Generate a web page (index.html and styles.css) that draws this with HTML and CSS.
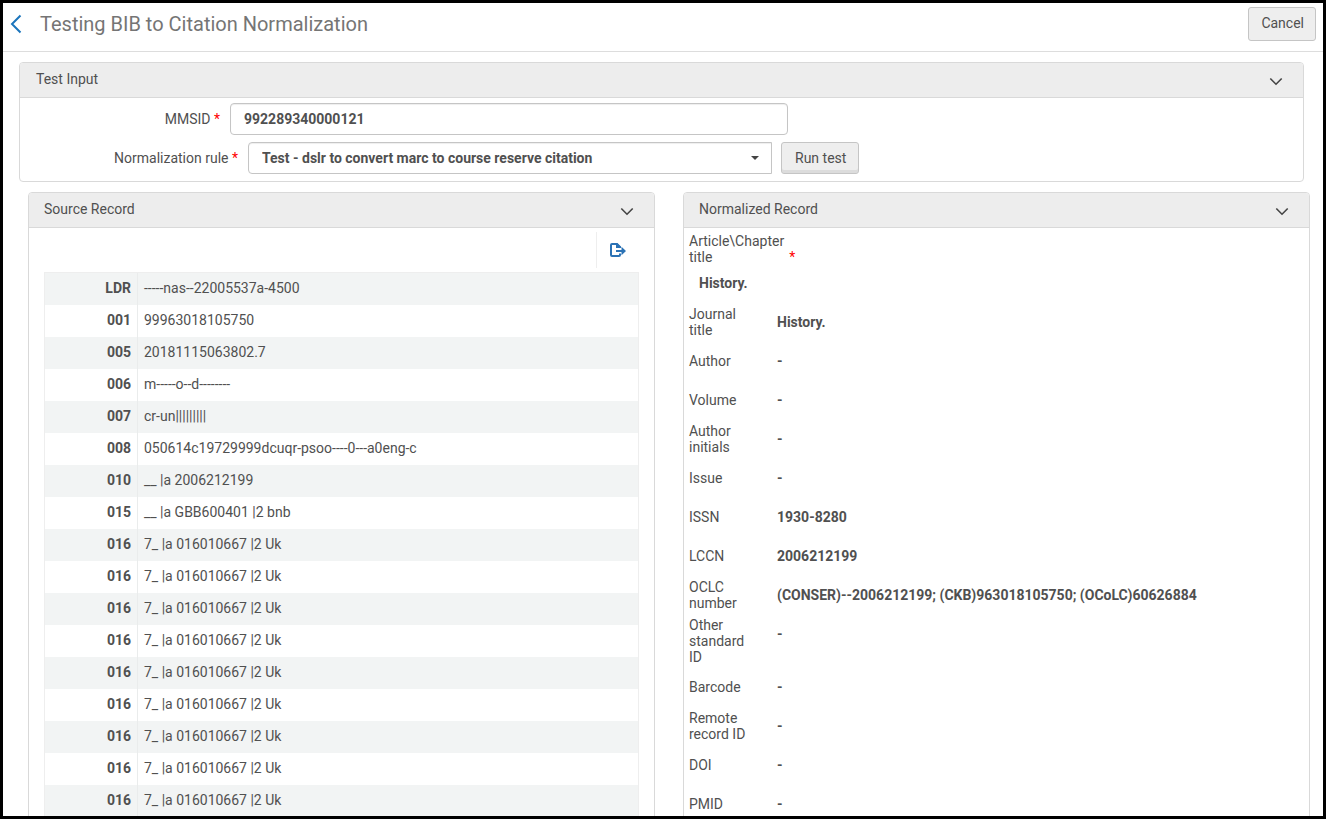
FILE: index.html
```html
<!DOCTYPE html>
<html lang="en">
<head>
<meta charset="utf-8">
<title>Testing BIB to Citation Normalization</title>
<link rel="stylesheet" href="styles.css">
</head>
<body>
<div class="app">
  <header class="page-header">
    <a class="back" href="#" aria-label="Back"><svg width="12" height="20" viewBox="0 0 12 20"><path d="M10.500 1.500 2 10l8.500 8.500"/></svg></a>
    <h1 class="page-title">Testing BIB to Citation Normalization</h1>
    <button class="btn btn-cancel" type="button">Cancel</button>
  </header>

  <main>
    <section class="panel test-input">
      <div class="panel-head">
        <h2>Test Input</h2>
        <button class="toggle" type="button" aria-label="Collapse test input"><svg width="14" height="9" viewBox="0 0 14 9"><path d="M1.300 1.500 7 7.200l5.700-5.700"/></svg></button>
      </div>
      <form class="form">
        <div class="form-row">
          <label class="form-label" for="mmsid">MMSID <span class="req">*</span></label>
          <input class="control control-text" id="mmsid" type="text" value="992289340000121">
        </div>
        <div class="form-row">
          <label class="form-label form-label-wide" for="rule">Normalization rule <span class="req">*</span></label>
          <div class="select-wrap">
            <select class="control control-select" id="rule"><option>Test - dslr to convert marc to course reserve citation</option></select>
            <svg class="caret" width="8" height="4" viewBox="0 0 8 4"><path d="M0 0h8L4 4z"/></svg>
          </div>
          <button class="btn btn-run" type="button">Run test</button>
        </div>
      </form>
    </section>

    <div class="records">
      <section class="panel">
        <div class="panel-head">
          <h2>Source Record</h2>
          <button class="toggle" type="button" aria-label="Collapse source record"><svg width="14" height="9" viewBox="0 0 14 9"><path d="M1.300 1.500 7 7.200l5.700-5.700"/></svg></button>
        </div>
        <div class="source-body">
          <div class="toolbar">
            <button class="export" type="button" aria-label="Export record"><svg width="18" height="16" viewBox="0 0 18 16"><path class="line" d="M11 11.500V13a1 1 0 0 1-1 1H3a1 1 0 0 1-1-1V3a1 1 0 0 1 1-1h4.500L11 5.500"/><path class="fill" d="M7 1h1.500L12 4.500V6H7zM7 8h5.500V4.800L17 9l-4.500 4.200V10H7z"/></svg></button>
          </div>
          <table class="marc">
            <tbody>
              <tr><th scope="row">LDR</th><td>-----nas--22005537a-4500</td></tr>
              <tr><th scope="row">001</th><td>99963018105750</td></tr>
              <tr><th scope="row">005</th><td>20181115063802.7</td></tr>
              <tr><th scope="row">006</th><td>m-----o--d--------</td></tr>
              <tr><th scope="row">007</th><td>cr-un|||||||||</td></tr>
              <tr><th scope="row">008</th><td>050614c19729999dcuqr-psoo----0---a0eng-c</td></tr>
              <tr><th scope="row">010</th><td>__ |a 2006212199</td></tr>
              <tr><th scope="row">015</th><td>__ |a GBB600401 |2 bnb</td></tr>
              <tr><th scope="row">016</th><td>7_ |a 016010667 |2 Uk</td></tr>
              <tr><th scope="row">016</th><td>7_ |a 016010667 |2 Uk</td></tr>
              <tr><th scope="row">016</th><td>7_ |a 016010667 |2 Uk</td></tr>
              <tr><th scope="row">016</th><td>7_ |a 016010667 |2 Uk</td></tr>
              <tr><th scope="row">016</th><td>7_ |a 016010667 |2 Uk</td></tr>
              <tr><th scope="row">016</th><td>7_ |a 016010667 |2 Uk</td></tr>
              <tr><th scope="row">016</th><td>7_ |a 016010667 |2 Uk</td></tr>
              <tr><th scope="row">016</th><td>7_ |a 016010667 |2 Uk</td></tr>
              <tr><th scope="row">016</th><td>7_ |a 016010667 |2 Uk</td></tr>
            </tbody>
          </table>
        </div>
      </section>

      <section class="panel">
        <div class="panel-head">
          <h2>Normalized Record</h2>
          <button class="toggle" type="button" aria-label="Collapse normalized record"><svg width="14" height="9" viewBox="0 0 14 9"><path d="M1.300 1.500 7 7.200l5.700-5.700"/></svg></button>
        </div>
        <dl class="fields">
          <div class="field-stacked">
            <dt><span>Article\Chapter<br>title</span><span class="req">*</span></dt>
            <dd>History.</dd>
          </div>
          <div class="field"><dt>Journal title</dt><dd>History.</dd></div>
          <div class="field"><dt>Author</dt><dd>-</dd></div>
          <div class="field"><dt>Volume</dt><dd>-</dd></div>
          <div class="field"><dt>Author initials</dt><dd>-</dd></div>
          <div class="field"><dt>Issue</dt><dd>-</dd></div>
          <div class="field"><dt>ISSN</dt><dd>1930-8280</dd></div>
          <div class="field"><dt>LCCN</dt><dd>2006212199</dd></div>
          <div class="field"><dt>OCLC number</dt><dd>(CONSER)--2006212199; (CKB)963018105750; (OCoLC)60626884</dd></div>
          <div class="field"><dt>Other standard ID</dt><dd>-</dd></div>
          <div class="field"><dt>Barcode</dt><dd>-</dd></div>
          <div class="field"><dt>Remote record ID</dt><dd>-</dd></div>
          <div class="field"><dt>DOI</dt><dd>-</dd></div>
          <div class="field"><dt>PMID</dt><dd>-</dd></div>
        </dl>
      </section>
    </div>
  </main>
</div>
</body>
</html>
```

FILE: styles.css
```css
* {
  box-sizing: border-box;
}

body {
  margin: 0;
  font-family: Roboto, "Liberation Sans", sans-serif;
  font-size: 14px;
  line-height: 16px;
  color: #505050;
  background: #fff;
}

.app {
  height: 100vh;
  overflow: hidden;
  border: 3px solid #000;
}

button,
input,
select {
  font: inherit;
  color: inherit;
}

.page-header {
  display: flex;
  align-items: flex-start;
  gap: 18px;
  height: 49px;
  padding: 4px 7px 0;
  border-bottom: 1px solid #ddd;
}

.back {
  padding-top: 7px;
}

.back svg {
  display: block;
  fill: none;
  stroke: #1b75bc;
  stroke-width: 2;
}

.page-title {
  flex: 1;
  margin: 0;
  font-size: 20px;
  line-height: 34px;
  font-weight: 400;
  color: #757575;
}

.btn {
  border: 1px solid #c5c5c5;
  border-radius: 3px;
  background: #eee;
  white-space: nowrap;
}

.btn-cancel {
  height: 34px;
  padding: 0 11px 2px 12px;
}

.btn-run {
  height: 32px;
  padding: 0 12px 0 13px;
  box-shadow: inset 0 -3px 0 #dcdcdc;
}

.panel {
  border: 1px solid #d9d9d9;
  border-radius: 4px;
}

.panel-head {
  display: flex;
  align-items: center;
  justify-content: space-between;
  height: 35px;
  padding: 0 20px 0 15px;
  background: #ededed;
  border-bottom: 1px solid #d9d9d9;
  border-radius: 3px 3px 0 0;
}

.panel-head h2 {
  margin: 0;
  padding-bottom: 2px;
  font-size: 14px;
  font-weight: 400;
}

.toggle {
  padding: 3px 0 0;
  border: 0;
  background: none;
}

.toggle svg {
  display: block;
  fill: none;
  stroke: #444;
  stroke-width: 1.6;
}

.test-input {
  margin: 10px 19px 0 16px;
}

.test-input .panel-head {
  padding-left: 16px;
}

.form {
  display: grid;
  gap: 7px;
  padding: 5px 0 7px;
}

.form-row {
  display: flex;
  align-items: center;
  gap: 9px;
}

.form-label {
  width: 201px;
  padding-right: 1px;
  text-align: right;
}

.form-label-wide {
  width: 219px;
}

.req {
  color: #f00;
}

.control {
  width: 100%;
  height: 32px;
  padding: 0 13px;
  border: 1px solid #c5c5c5;
  border-radius: 4px;
  background: #fff;
  box-shadow: inset 0 1px 1px #eee;
  font-weight: 700;
}

.control-text {
  max-width: 558px;
}

.select-wrap {
  position: relative;
  flex: 0 1 524px;
}

.control-select {
  display: block;
  appearance: none;
  border-radius: 4px 0 0 4px;
}

.caret {
  position: absolute;
  top: 14px;
  right: 13px;
  fill: #444;
  pointer-events: none;
}

.records {
  display: grid;
  grid-template-columns: 1fr 1fr;
  gap: 28px;
  margin: 10px 13px 0 25px;
}

.source-body {
  padding: 4px 15px 15px;
}

.toolbar {
  display: flex;
  justify-content: flex-end;
  height: 40px;
}

.export {
  height: 36px;
  padding: 0 12px;
  border: 0;
  border-left: 1px solid #eee;
  background: none;
}

.export svg {
  display: block;
}

.export .line {
  fill: none;
  stroke: #2b72b5;
  stroke-width: 2;
}

.export .fill {
  fill: #2b72b5;
}

.marc {
  width: 100%;
  border: 1px solid #eee;
  border-spacing: 0;
}

.marc th,
.marc td {
  height: 32px;
  padding: 0 6px 2px;
  text-align: left;
}

.marc th {
  width: 93px;
  text-align: right;
  border-right: 1px solid #eaecec;
}

.marc tr:nth-child(odd) {
  background: #f2f4f4;
}

.fields {
  margin: 0;
  padding: 5px;
}

.fields dd {
  margin: 0;
  line-height: 34px;
  font-weight: 700;
}

.field-stacked {
  padding-bottom: 2px;
}

.field-stacked dt {
  display: flex;
  align-items: flex-end;
  gap: 5px;
  padding-bottom: 1px;
}

.field-stacked dd {
  padding-left: 10px;
}

.field {
  display: grid;
  grid-template-columns: 66px 1fr;
  gap: 22px;
  min-height: 39px;
  padding: 3px 0 2px;
}

.field dt {
  align-self: center;
}
```
